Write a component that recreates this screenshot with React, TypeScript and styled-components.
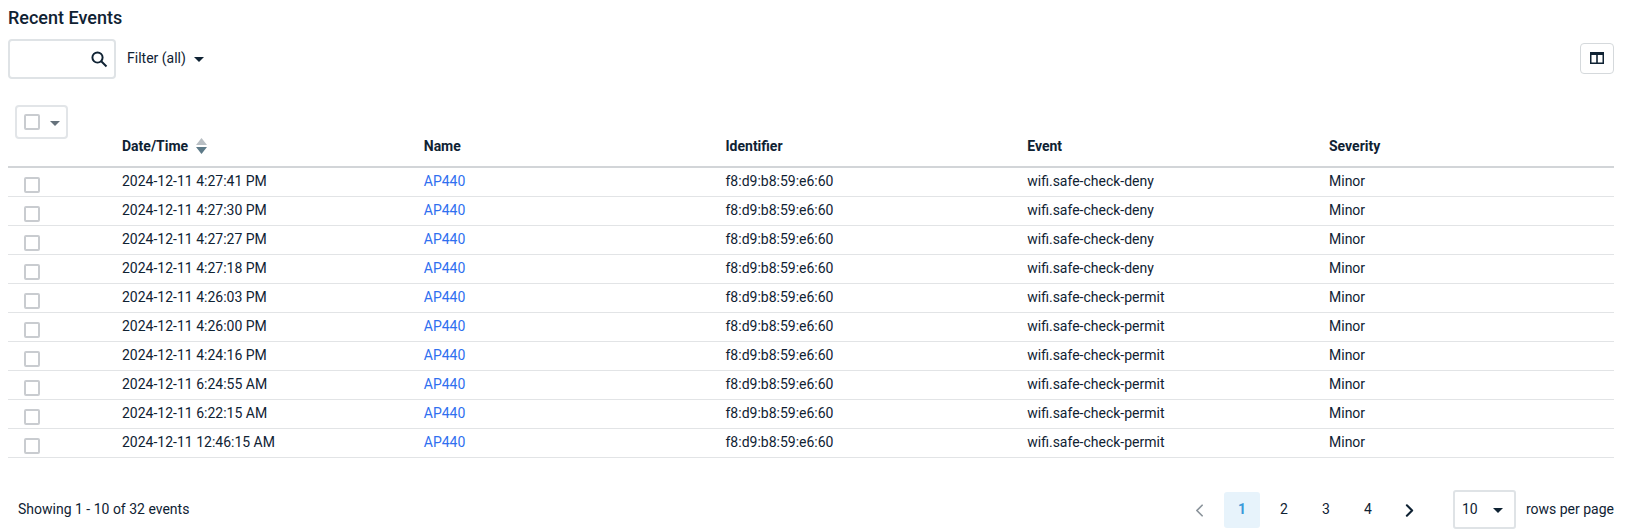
import styled, { createGlobalStyle } from "styled-components";
import { ChevronLeft, ChevronRight } from "lucide-react";

const rows = [
  ["2024-12-11 4:27:41 PM", "wifi.safe-check-deny"],
  ["2024-12-11 4:27:30 PM", "wifi.safe-check-deny"],
  ["2024-12-11 4:27:27 PM", "wifi.safe-check-deny"],
  ["2024-12-11 4:27:18 PM", "wifi.safe-check-deny"],
  ["2024-12-11 4:26:03 PM", "wifi.safe-check-permit"],
  ["2024-12-11 4:26:00 PM", "wifi.safe-check-permit"],
  ["2024-12-11 4:24:16 PM", "wifi.safe-check-permit"],
  ["2024-12-11 6:24:55 AM", "wifi.safe-check-permit"],
  ["2024-12-11 6:22:15 AM", "wifi.safe-check-permit"],
  ["2024-12-11 12:46:15 AM", "wifi.safe-check-permit"],
];

export default function App() {
  return (
    <Page>
      <GlobalStyle />
      <Title>Recent Events</Title>
      <Toolbar>
        <SearchBox>
          <svg width="18" height="18" viewBox="0 0 24 24" fill="none" stroke="#0f2233" strokeWidth="2.6">
            <circle cx="10" cy="10" r="6.8" />
            <path d="M15 15l7 7" />
          </svg>
        </SearchBox>
        <FilterButton>
          Filter (all)
          <Caret />
        </FilterButton>
        <ColumnsButton>
          <svg width="14" height="12" viewBox="0 0 14 12">
            <path fill="#0f2233" fillRule="evenodd" d="M0 0h14v12H0zM1.5 3v7.5h4.7V3zM7.8 3v7.5h4.7V3z" />
          </svg>
        </ColumnsButton>
      </Toolbar>
      <BulkSelect>
        <Check />
        <Caret $muted />
      </BulkSelect>
      <HeadRow>
        <span />
        <HeadCell>
          Date/Time
          <SortIcon width="11" height="16" viewBox="0 0 11 16">
            <path fill="#b9bfc4" d="M5.5 0L11 7H0z" />
            <path fill="#5d7a88" d="M0 9h11l-5.5 7z" />
          </SortIcon>
        </HeadCell>
        <HeadCell>Name</HeadCell>
        <HeadCell>Identifier</HeadCell>
        <HeadCell>Event</HeadCell>
        <HeadCell>Severity</HeadCell>
      </HeadRow>
      {rows.map(([time, event]) => (
        <Row key={time}>
          <CheckCell>
            <Check />
          </CheckCell>
          <span>{time}</span>
          <NameLink>AP440</NameLink>
          <span>f8:d9:b8:59:e6:60</span>
          <span>{event}</span>
          <span>Minor</span>
        </Row>
      ))}
      <Footer>
        <Showing>Showing 1 - 10 of 32 events</Showing>
        <Pager>
          <Arrow $muted>
            <ChevronLeft size={21} strokeWidth={2} />
          </Arrow>
          <PageNum $active>1</PageNum>
          <PageNum>2</PageNum>
          <PageNum>3</PageNum>
          <PageNum>4</PageNum>
          <Arrow>
            <ChevronRight size={21} strokeWidth={2.4} />
          </Arrow>
        </Pager>
        <RowsSelect>
          10
          <Caret />
        </RowsSelect>
        <RowsLabel>rows per page</RowsLabel>
      </Footer>
    </Page>
  );
}

const GlobalStyle = createGlobalStyle`
  body {
    margin: 0;
    background: #fff;
    font-family: Roboto, "Liberation Sans", sans-serif;
    font-size: 14px;
    color: #0f2233;
  }
`;

const Page = styled.div`
  width: 1632px;
  height: 532px;
  box-sizing: border-box;
  padding: 7px 18px 0 8px;
  overflow: hidden;
`;

const Title = styled.h1`
  margin: 0;
  font-size: 18px;
  line-height: 22px;
  font-weight: 500;
`;

const Toolbar = styled.div`
  display: flex;
  align-items: center;
  margin-top: 10px;
  height: 40px;
`;

const SearchBox = styled.div`
  width: 108px;
  height: 40px;
  box-sizing: border-box;
  border: 2px solid #dfe3e6;
  border-radius: 4px;
  display: flex;
  align-items: center;
  justify-content: flex-end;
  padding-right: 6px;
`;

const FilterButton = styled.div`
  display: flex;
  align-items: center;
  gap: 8px;
  margin: -2px 0 0 11px;
`;

const Caret = styled.i<{ $muted?: boolean }>`
  display: block;
  width: 0;
  height: 0;
  margin-top: 2px;
  border-left: 5px solid transparent;
  border-right: 5px solid transparent;
  border-top: 5px solid ${(p) => (p.$muted ? "#66727c" : "#0f2233")};
`;

const ColumnsButton = styled.div`
  margin: -2px 0 0 auto;
  width: 34px;
  height: 31px;
  box-sizing: border-box;
  border: 1px solid #d5d9dc;
  border-radius: 4px;
  display: flex;
  align-items: center;
  justify-content: center;
`;

const BulkSelect = styled.div`
  margin: 26px 0 0 7px;
  width: 53px;
  height: 34px;
  box-sizing: border-box;
  border: 2px solid #e2e5e8;
  border-radius: 4px;
  display: flex;
  align-items: center;
  gap: 10px;
  padding-left: 7px;
`;

const Check = styled.div`
  width: 16px;
  height: 16px;
  box-sizing: border-box;
  border: 2px solid #c9ccd0;
  border-radius: 2px;
`;

const columns = "114px repeat(4, 301.75px) 1fr";

const HeadRow = styled.div`
  display: grid;
  grid-template-columns: ${columns};
  align-items: center;
  height: 29px;
  padding-bottom: 13px;
  border-bottom: 2px solid #d2d5d8;
  box-sizing: border-box;
`;

const HeadCell = styled.div`
  display: flex;
  align-items: center;
  gap: 8px;
  font-weight: 700;
  line-height: 14px;
`;

const SortIcon = styled.svg`
  display: block;
  margin: -1px 0;
`;

const Row = styled.div`
  display: grid;
  grid-template-columns: ${columns};
  align-items: center;
  height: 29px;
  box-sizing: border-box;
  padding-bottom: 2px;
  border-bottom: 1px solid #e2e4e6;
`;

const CheckCell = styled.div`
  padding: 7px 0 0 16px;
`;

const NameLink = styled.a`
  color: #2f6ff0;
`;

const Footer = styled.div`
  display: flex;
  align-items: center;
  margin-top: 31px;
  height: 40px;
`;

const Showing = styled.span`
  margin-left: 10px;
  margin-right: auto;
`;

const Pager = styled.div`
  display: flex;
  align-items: center;
  gap: 6px;
  margin-top: 2px;
`;

const Arrow = styled.span<{ $muted?: boolean }>`
  display: flex;
  align-items: center;
  justify-content: center;
  width: 36px;
  height: 36px;
  color: ${(p) => (p.$muted ? "#8b949b" : "#0f2233")};
`;

const PageNum = styled.span<{ $active?: boolean }>`
  width: 36px;
  height: 36px;
  box-sizing: border-box;
  padding-bottom: 2px;
  border-radius: 3px;
  display: flex;
  align-items: center;
  justify-content: center;
  font-weight: ${(p) => (p.$active ? 700 : 400)};
  color: ${(p) => (p.$active ? "#3a9ad9" : "#0f2233")};
  background: ${(p) => (p.$active ? "#e7f3fb" : "transparent")};
`;

const RowsSelect = styled.div`
  margin: 1px 0 0 25px;
  width: 63px;
  height: 39px;
  box-sizing: border-box;
  border: 2px solid #dfe3e6;
  border-radius: 3px;
  display: flex;
  align-items: center;
  justify-content: space-between;
  padding: 0 11px 1px 7px;
`;

const RowsLabel = styled.span`
  margin-left: 10px;
`;
